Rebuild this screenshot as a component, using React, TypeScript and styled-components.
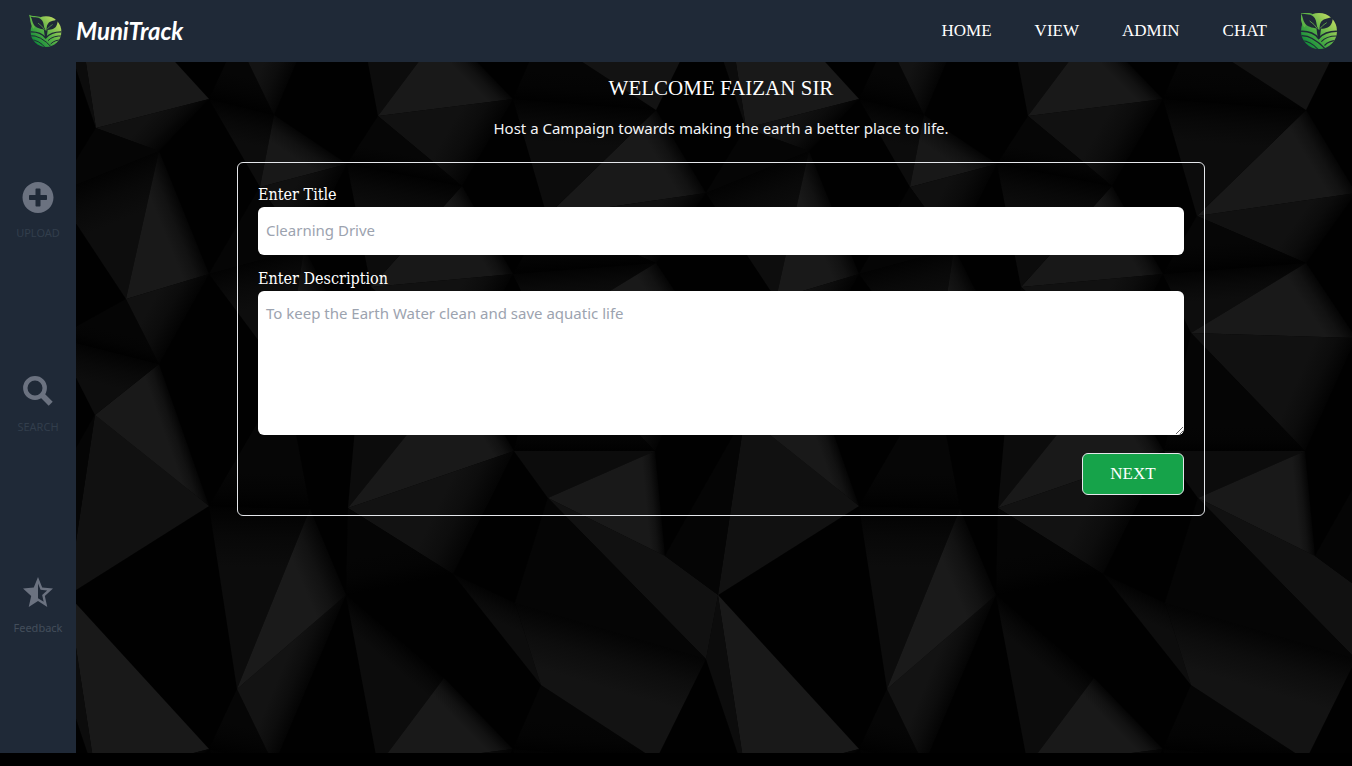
import React from "react";
import styled, { createGlobalStyle } from "styled-components";
import { FaPlusCircle } from "react-icons/fa";

const serif = `"Liberation Serif", "Times New Roman", serif`;
const slab = `"DejaVu Serif Condensed", "DejaVu Serif", serif`;
const sans = `"Noto Sans", "Open Sans", sans-serif`;

const GlobalStyle = createGlobalStyle`
  *, *::before, *::after { box-sizing: border-box; }
  body { margin: 0; background: #000; color: #fff; font-family: ${sans}; }
`;

/* ---------- faceted backdrop ---------- */

type Point = [number, number];
type Face = { points: Point[]; tone: number; shade?: [Point, Point, number] };

const TILE = 650;
const down = ([x, y]: Point): Point => [x, y + TILE];
const left = ([x, y]: Point): Point => [x - TILE, y];

const A: Point = [20, 66], B: Point = [133, 37], C: Point = [83, 89], D: Point = [198, 53];
const E: Point = [184, 125], F: Point = [271, 102], G: Point = [302, 54], H: Point = [437, 37];
const I: Point = [386, 124], J: Point = [580, 48], K: Point = [630, 131], L: Point = [471, 154];
const M: Point = [580, 201], N: Point = [133, 212], O: Point = [50, 237], P: Point = [83, 302];
const Q: Point = [437, 212], R: Point = [295, 225], S: Point = [465, 271], T: Point = [630, 276];
const U: Point = [19, 353], V: Point = [133, 444], W: Point = [642, 533], X: Point = [234, 447];
const Y: Point = [272, 446], Z: Point = [270, 533];
const a: Point = [161, 627], b: Point = [377, 512], c: Point = [438, 389], d: Point = [579, 389];
const e: Point = [472, 436], f: Point = [589, 494], g: Point = [630, 597], h: Point = [465, 623];
const i: Point = [368, 616], j: Point = [439, 541], k: Point = [228, 186], m: Point = [209, 314];
const n: Point = [285, 298], o: Point = [387, 303];

const faces: Face[] = [
  { points: [left(W), down(B), down(A)], tone: 25 },
  { points: [left(g), left(W), down(A)], tone: 12 },
  { points: [A, B, C], tone: 17, shade: [B, C, 30] },
  { points: [left(K), A, C], tone: 5 },
  { points: [a, down(B), down(D)], tone: 6, shade: [down(B), down(D), 30] },
  { points: [a, Z, down(D)], tone: 19, shade: [Z, down(D), 30] },
  { points: [V, X, a], tone: 12, shade: [V, X, 60] },
  { points: [X, Z, a], tone: 26, shade: [X, Z, 36] },
  { points: [Z, i, down(G)], tone: 12, shade: [Z, i, 24] },
  { points: [i, down(G), down(H)], tone: 25, shade: [i, down(H), 20] },
  { points: [b, j, h], tone: 13, shade: [b, j, 24] },
  { points: [h, down(H), down(J)], tone: 5, shade: [down(H), down(J), 30] },
  { points: [j, h, down(J), g], tone: 19, shade: [j, g, 56] },
  { points: [G, H, I], tone: 17, shade: [H, I, 40] },
  { points: [G, F, I], tone: 6, shade: [F, I, 20] },
  { points: [B, D, E], tone: 12, shade: [B, D, 34] },
  { points: [D, E, F], tone: 24, shade: [D, F, 24] },
  { points: [E, F, k], tone: 16, shade: [F, k, 36] },
  { points: [N, E, k], tone: 5 },
  { points: [N, k, m], tone: 13, shade: [N, k, 44] },
  { points: [k, m, n], tone: 22, shade: [k, n, 24] },
  { points: [V, X, m], tone: 6, shade: [V, X, 34] },
  { points: [Y, n, o], tone: 12 },
  { points: [Y, o, c], tone: 25, shade: [o, c, 20] },
  { points: [Y, c, b], tone: 18, shade: [c, b, 44] },
  { points: [Y, Z, b], tone: 5, shade: [Z, b, 34] },
  { points: [c, d, e], tone: 12 },
  { points: [d, e, f], tone: 25, shade: [d, f, 14] },
  { points: [e, f, W, g], tone: 17 },
  { points: [e, j, g], tone: 5 },
  { points: [U, V, left(W)], tone: 17 },
  { points: [P, U, V], tone: 25, shade: [P, V, 18] },
  { points: [left(T), P, U], tone: 13, shade: [left(T), P, 34] },
  { points: [left(T), O, P], tone: 5, shade: [left(T), P, 20] },
  { points: [left(f), U, left(W)], tone: 5 },
  { points: [J, K, L], tone: 25, shade: [J, K, 24] },
  { points: [K, L, M], tone: 17, shade: [K, M, 32] },
  { points: [H, J, L], tone: 12, shade: [H, J, 40] },
  { points: [L, Q, M], tone: 6, shade: [Q, M, 26] },
  { points: [Q, M, S], tone: 13, shade: [Q, M, 30] },
  { points: [M, S, T], tone: 25, shade: [M, T, 24] },
  { points: [S, T, d], tone: 17, shade: [T, d, 36] },
  { points: [S, d, c], tone: 5, shade: [d, c, 24] },
  { points: [I, R, Q], tone: 24, shade: [I, Q, 20] },
  { points: [R, Q, o], tone: 17, shade: [Q, o, 40] },
  { points: [R, o, n], tone: 5 },
  { points: [F, I, R], tone: 12, shade: [F, I, 36] },
  { points: [left(K), C, O], tone: 13, shade: [left(K), C, 50] },
  { points: [C, O, N], tone: 25, shade: [C, N, 26] },
  { points: [O, N, P], tone: 17, shade: [N, P, 36] },
];

const grey = (tone: number) => `rgb(${tone}, ${tone}, ${tone})`;

/* The far end of a shadow that falls from an edge into its face. */
function shadeVector(face: Face) {
  const [p, q, depth] = face.shade!;
  const cx = face.points.reduce((sum, v) => sum + v[0], 0) / face.points.length;
  const cy = face.points.reduce((sum, v) => sum + v[1], 0) / face.points.length;
  const length = Math.hypot(q[0] - p[0], q[1] - p[1]);
  let nx = -(q[1] - p[1]) / length;
  let ny = (q[0] - p[0]) / length;
  if (nx * (cx - p[0]) + ny * (cy - p[1]) < 0) {
    nx = -nx;
    ny = -ny;
  }
  return { x1: p[0], y1: p[1], x2: p[0] + nx * depth, y2: p[1] + ny * depth };
}

const BackdropArt = styled.svg`
  position: absolute;
  inset: 0;
  width: 100%;
  height: 100%;
  z-index: 0;
`;

const shifts = [-TILE, 0, TILE];

function Backdrop() {
  return (
    <BackdropArt aria-hidden="true">
      <defs>
        {faces.map((face, index) =>
          face.shade ? (
            <linearGradient key={index} id={`face-${index}`} gradientUnits="userSpaceOnUse" {...shadeVector(face)}>
              <stop offset="0" stopColor={grey(Math.round(face.tone * 0.2))} />
              <stop offset="0.5" stopColor={grey(Math.round(face.tone * 0.7))} />
              <stop offset="1" stopColor={grey(face.tone)} />
            </linearGradient>
          ) : null
        )}
        <g id="facets">
          {faces.map((face, index) => (
            <polygon
              key={index}
              points={face.points.map((v) => v.join(",")).join(" ")}
              fill={face.shade ? `url(#face-${index})` : grey(face.tone)}
            />
          ))}
        </g>
        <pattern id="facet-tile" width={TILE} height={TILE} patternUnits="userSpaceOnUse">
          {shifts.map((dx) => shifts.map((dy) => <use key={`${dx}:${dy}`} href="#facets" x={dx} y={dy} />))}
        </pattern>
      </defs>
      <rect width="100%" height="100%" fill="#010101" />
      <rect width="100%" height="100%" fill="url(#facet-tile)" />
    </BackdropArt>
  );
}

/* ---------- icons ---------- */

function LeafLogo({ size, id, viewBox }: { size: number; id: string; viewBox: string }) {
  return (
    <svg width={size} height={size} viewBox={viewBox} aria-hidden="true">
      <defs>
        <linearGradient id={id} gradientUnits="userSpaceOnUse" x1="24" y1="96" x2="96" y2="24">
          <stop offset="0" stopColor="#0f8a3a" />
          <stop offset="0.45" stopColor="#55b045" />
          <stop offset="1" stopColor="#c3dc62" />
        </linearGradient>
        <clipPath id={`${id}-clip`}>
          <circle cx="61" cy="63" r="46" />
        </clipPath>
      </defs>
      <circle cx="61" cy="63" r="46" fill={`url(#${id})`} />
      <path d="M10 12 C20 18 34 14 46 20 L24 54 C13 42 15 26 10 12 Z" fill="#5fb347" />
      <g fill="#1f2937">
        <path d="M15 18 C27 21 42 17 50 30 C55 38 54 46 57 57 C42 54 31 52 25 43 C19 34 20 25 15 18 Z" />
        <path d="M99 25 C88 31 74 29 67 39 C62 46 64 50 62 58 C74 57 86 57 92 46 C96 39 95 32 99 25 Z" />
        <path d="M53 46 L58 56 L61 61 L67 50 L63 82 H58 Z" />
      </g>
      <g fill="none" stroke="#67b848" strokeWidth="2" strokeLinecap="round">
        <path d="M38 38 Q50 46 56 56" />
        <path d="M80 42 Q70 48 64 56" />
      </g>
      <g clipPath={`url(#${id}-clip)`} fill="none" stroke="#1f2937" strokeWidth="3">
        <path d="M12 64 Q44 62 60 82 Q78 62 112 64" strokeWidth="4" />
        <path d="M12 75 Q44 72 80 112" />
        <path d="M14 88 Q38 86 60 112" />
        <path d="M112 76 Q82 74 67 90" />
        <path d="M112 88 Q88 86 75 100" />
      </g>
    </svg>
  );
}

function SearchGlyph() {
  return (
    <svg width="32" height="32" viewBox="0 0 32 32" fill="none" stroke="currentColor" aria-hidden="true">
      <circle cx="13" cy="13" r="9.7" strokeWidth="4.4" />
      <path d="M19 19 L28.7 28.7" strokeWidth="5.6" />
    </svg>
  );
}

function HalfStarGlyph() {
  return (
    <svg width="30" height="30" viewBox="2 2 20 19" preserveAspectRatio="none" fill="currentColor" aria-hidden="true">
      <path d="M22 9.24l-7.19-.62L12 2 9.19 8.63 2 9.24l5.46 4.73L5.82 21 12 17.27 18.18 21l-1.63-7.03L22 9.24zM12 15.4V6.1l1.71 4.04 4.38.38-3.32 2.88 1 4.28L12 15.4z" />
    </svg>
  );
}

/* ---------- page frame ---------- */

const Page = styled.div`
  display: flex;
  flex-direction: column;
  min-height: 100vh;
  padding-bottom: 13px;
`;

const Header = styled.header`
  display: flex;
  align-items: center;
  justify-content: space-between;
  height: 62px;
  padding: 0 15px 0 29px;
  background: #1f2937;
`;

const Brand = styled.a`
  display: flex;
  align-items: center;
  gap: 13px;
  color: #fff;
  font-family: Lato, sans-serif;
  font-size: 24px;
  font-style: italic;
  font-weight: 700;
  line-height: 32px;
  text-decoration: none;
`;

const Nav = styled.nav`
  display: flex;
  align-items: center;
  gap: 43px;
`;

const NavLink = styled.a`
  color: #fff;
  font-family: ${serif};
  font-size: 17px;
  line-height: 24px;
  text-decoration: none;
`;

const Account = styled.a`
  display: flex;
  margin-left: -9px;
`;

const Body = styled.div`
  display: flex;
  flex: 1;
`;

const Sidebar = styled.aside`
  display: grid;
  flex: none;
  grid-template-rows: 194px 201px auto;
  align-content: start;
  justify-items: center;
  width: 76px;
  padding-top: 119px;
  background: #1f2937;
`;

const SideLink = styled.a<{ $label: string }>`
  display: flex;
  flex-direction: column;
  align-items: center;
  align-self: start;
  gap: 12px;
  color: ${(props) => props.$label};
  font-size: 11px;
  line-height: 16px;
  text-decoration: none;
`;

const SideIcon = styled.span`
  display: flex;
  align-items: center;
  justify-content: center;
  width: 32px;
  height: 32px;
  color: #6b7280;
`;

const Main = styled.main`
  position: relative;
  flex: 1;
  min-width: 0;
  background: #010101;
`;

const Content = styled.div`
  position: relative;
  z-index: 1;
  display: flex;
  flex-direction: column;
  align-items: center;
  padding: 12px 0 24px 14px;
`;

const Title = styled.h1`
  margin: 0;
  font-family: ${serif};
  font-size: 21px;
  font-weight: 400;
  line-height: 28px;
`;

const Lead = styled.p`
  margin: 14px 0 22px;
  color: #f3f4f6;
  font-size: 15px;
  line-height: 24px;
`;

/* ---------- form ---------- */

const Form = styled.form`
  display: flex;
  flex-direction: column;
  width: 100%;
  max-width: 968px;
  padding: 20px;
  border: 1px solid #e5e7eb;
  border-radius: 6px;
`;

const Field = styled.div`
  display: flex;
  flex-direction: column;
  margin-bottom: 12px;
`;

const Label = styled.label`
  font-family: ${slab};
  font-size: 16px;
  line-height: 24px;
`;

const TextInput = styled.input`
  height: 48px;
  padding: 8px 8px 10px;
  border: 0;
  border-radius: 6px;
  background: #fff;
  color: #111827;
  font: 15px/24px ${sans};
  &::placeholder { color: #9ca3af; }
`;

const TextBox = styled.textarea`
  height: 144px;
  padding: 10px 8px;
  border: 0;
  border-radius: 6px;
  background: #fff;
  color: #111827;
  font: 15px/24px ${sans};
  &::placeholder { color: #9ca3af; }
`;

const NextButton = styled.button`
  align-self: flex-end;
  width: 102px;
  height: 42px;
  margin-top: 6px;
  border: 1px solid #e5e7eb;
  border-radius: 6px;
  background: #16a34a;
  color: #fff;
  font-family: ${serif};
  font-size: 17px;
  line-height: 24px;
`;

const links = ["HOME", "VIEW", "ADMIN", "CHAT"];

const sideLinks = [
  { text: "UPLOAD", color: "#323e4c", icon: <FaPlusCircle size={33} /> },
  { text: "SEARCH", color: "#323e4c", icon: <SearchGlyph /> },
  { text: "Feedback", color: "#434e5b", icon: <HalfStarGlyph /> },
];

export default function App() {
  return (
    <Page>
      <GlobalStyle />
      <Header>
        <Brand href="#home">
          <LeafLogo size={34} id="brand-leaf" viewBox="10 10 102 102" />
          MuniTrack
        </Brand>
        <Nav>
          {links.map((text) => (
            <NavLink key={text} href={`#${text.toLowerCase()}`}>
              {text}
            </NavLink>
          ))}
          <Account href="#account" aria-label="Account">
            <LeafLogo size={36} id="account-leaf" viewBox="15 17 92 92" />
          </Account>
        </Nav>
      </Header>
      <Body>
        <Sidebar>
          {sideLinks.map((link) => (
            <SideLink key={link.text} href={`#${link.text.toLowerCase()}`} $label={link.color}>
              <SideIcon>{link.icon}</SideIcon>
              {link.text}
            </SideLink>
          ))}
        </Sidebar>
        <Main>
          <Backdrop />
          <Content>
            <Title>WELCOME FAIZAN SIR</Title>
            <Lead>Host a Campaign towards making the earth a better place to life.</Lead>
            <Form onSubmit={(event) => event.preventDefault()}>
              <Field>
                <Label htmlFor="title">Enter Title</Label>
                <TextInput id="title" type="text" placeholder="Clearning Drive" />
              </Field>
              <Field>
                <Label htmlFor="description">Enter Description</Label>
                <TextBox id="description" placeholder="To keep the Earth Water clean and save aquatic life" />
              </Field>
              <NextButton type="submit">NEXT</NextButton>
            </Form>
          </Content>
        </Main>
      </Body>
    </Page>
  );
}
